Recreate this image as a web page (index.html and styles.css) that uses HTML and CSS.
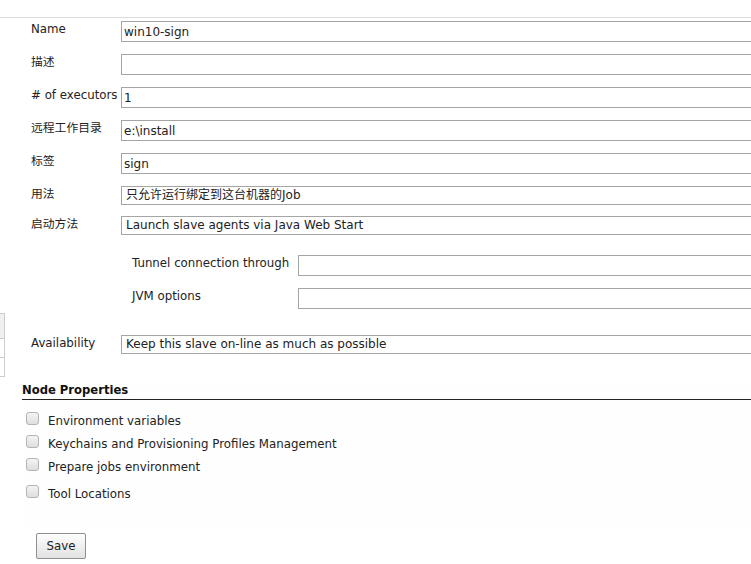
FILE: index.html
```html
<!DOCTYPE html>
<html lang="zh-CN">
<head>
  <meta charset="UTF-8">
  <title>win10-sign</title>
  <link rel="stylesheet" href="styles.css">
</head>
<body>
  <div class="topline"></div>
  <div class="page">
    <div class="side">
      <div class="side-row side-head"></div>
      <div class="side-row"></div>
      <div class="side-row"></div>
    </div>
    <div class="main">
      <div class="fields">
        <div class="row"><span class="lbl">Name</span><input class="txt" type="text" value="win10-sign"></div>
        <div class="row"><span class="lbl">描述</span><input class="txt" type="text" value=""></div>
        <div class="row"><span class="lbl"># of executors</span><input class="txt" type="text" value="1"></div>
        <div class="row"><span class="lbl">远程工作目录</span><input class="txt" type="text" value="e:\install"></div>
        <div class="row"><span class="lbl">标签</span><input class="txt" type="text" value="sign"></div>
        <div class="row row-sel"><span class="lbl">用法</span><div class="sel">只允许运行绑定到这台机器的Job</div></div>
        <div class="row row-sel"><span class="lbl">启动方法</span><div class="sel">Launch slave agents via Java Web Start</div></div>
        <div class="sub">
          <div class="row"><span class="lbl lbl-wide">Tunnel connection through</span><input class="txt" type="text" value=""></div>
          <div class="row"><span class="lbl lbl-wide">JVM options</span><input class="txt" type="text" value=""></div>
        </div>
        <div class="row row-avail"><span class="lbl">Availability</span><div class="sel">Keep this slave on-line as much as possible</div></div>
      </div>
      <div class="props">
        <h3 class="props-title">Node Properties</h3>
        <label class="prop"><input type="checkbox"><span>Environment variables</span></label>
        <label class="prop"><input type="checkbox"><span>Keychains and Provisioning Profiles Management</span></label>
        <label class="prop"><input type="checkbox"><span>Prepare jobs environment</span></label>
        <label class="prop prop-last"><input type="checkbox"><span>Tool Locations</span></label>
      </div>
      <div class="actions">
        <button class="btn-save" type="button">Save</button>
      </div>
    </div>
  </div>
</body>
</html>
```

FILE: styles.css
```css
html,body{
  margin: 0;
  padding: 0;
  background: #fff;
  overflow: hidden;
}
body{
  font-family: "DejaVu Sans", Verdana, "Noto Sans CJK SC", sans-serif;
  font-size: 11.8px;
  line-height: 15px;
  color: #222;
}
.topline{
  margin-top: 17px;
  border-top: 1px solid #ddd;
}
.page{
  display: flex;
}
.side{
  width: 4px;
  margin-top: 295px;
  border: 1px solid #ccc;
  border-left: 0;
  align-self: flex-start;
}
.side-row{
  height: 18px;
  border-top: 1px solid #ccc;
}
.side-row:first-child{
  border-top: 0;
}
.side-head{
  height: 24px;
  background: #f0f0f0;
}
.main{
  flex: 1;
  min-width: 0;
  padding-left: 17px;
}
.fields{
  padding: 3px 0 0 9px;
}
.row{
  display: flex;
  align-items: flex-start;
  height: 21px;
  margin-bottom: 12px;
}
.row-sel{
  height: 19px;
  margin-bottom: 11px;
}
.lbl{
  flex: 0 0 90px;
  white-space: nowrap;
  padding-top: 1px;
}
.lbl-wide{
  flex-basis: 166px;
}
.txt,.sel{
  flex: 0 0 700px;
  box-sizing: border-box;
  height: 21px;
  margin: 0;
  padding: 1px 2px 0;
  border: 1px solid #a5a5a5;
  background: #fff;
  font: inherit;
  font-size: 12px;
  color: #222;
  outline: none;
}
.sel{
  height: 19px;
  padding: 1px 4px 0;
  line-height: 15px;
  white-space: nowrap;
}
.sub{
  padding-top: 9px;
  padding-left: 101px;
}
.sub .row:last-child{
  margin-bottom: 26px;
}
.row-avail{
  height: 19px;
  margin-bottom: 0;
}
.props{
  margin-top: 29px;
  padding-bottom: 18px;
  background: #fefefe;
}
.props-title{
  margin: 0 0 12px;
  padding-bottom: 1px;
  font-size: 11.6px;
  font-weight: bold;
  line-height: 15px;
  color: #111;
  border-bottom: 1px solid #222;
}
.prop{
  display: flex;
  align-items: flex-start;
  height: 23px;
  padding-left: 4px;
}
.prop-last{
  margin-top: 4px;
}
.prop input{
  -webkit-appearance: none;
  appearance: none;
  width: 13px;
  height: 13px;
  margin: 0 9px 0 0;
  border: 1px solid #b4b4b4;
  border-radius: 3px;
  background: linear-gradient(#f4f4f4, #dedede);
}
.prop span{
  padding-top: 2px;
}
.actions{
  padding: 7px 0 0 14px;
}
.btn-save{
  width: 50px;
  height: 26px;
  padding: 0;
  border: 1px solid #8f8f8f;
  border-radius: 2px;
  background: linear-gradient(#fdfdfd, #e2e2e2);
  font-family: "DejaVu Sans", Verdana, sans-serif;
  font-size: 11.8px;
  color: #222;
}
```
